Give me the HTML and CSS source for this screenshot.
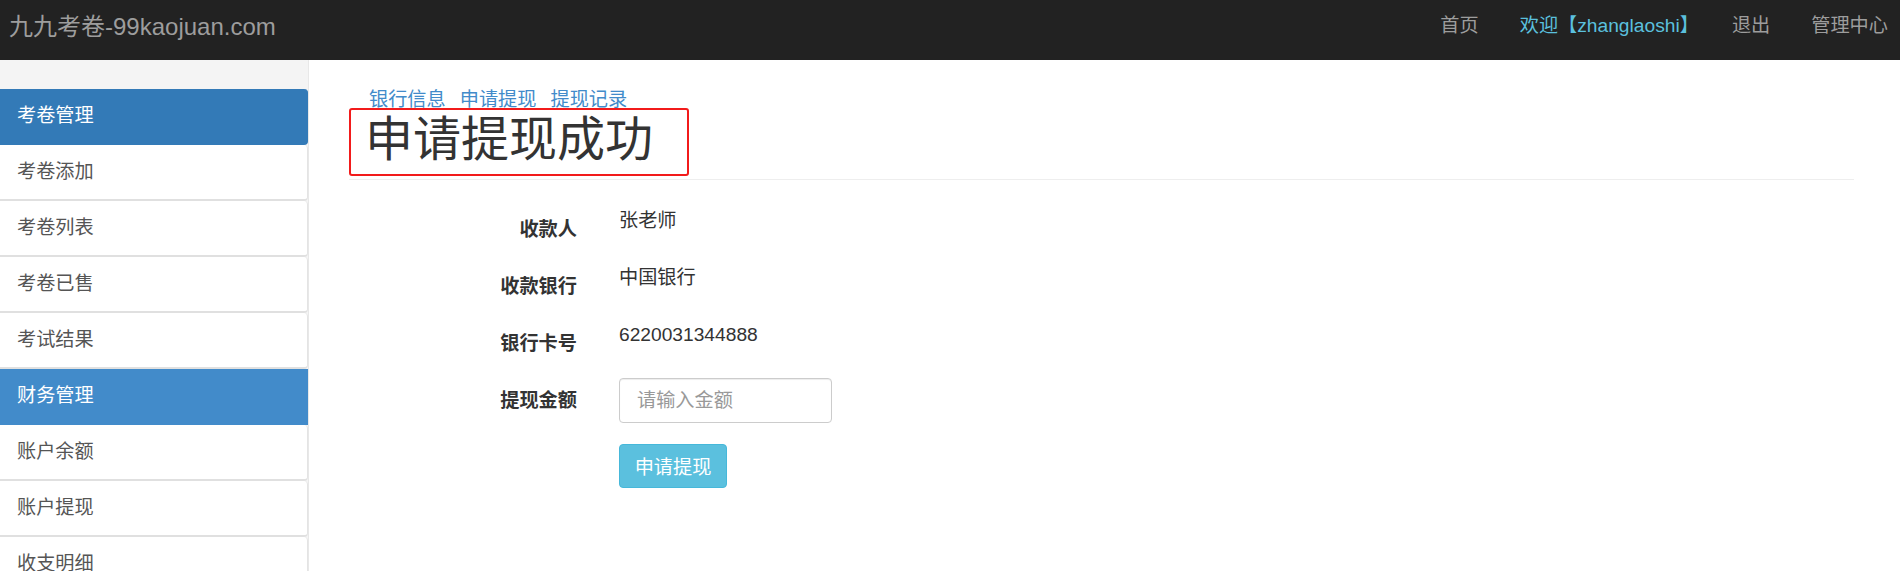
FILE: index.html
```html
<!DOCTYPE html>
<html lang="zh-CN">
<head>
<meta charset="UTF-8">
<meta name="viewport" content="width=device-width, initial-scale=1.0">
<title>申请提现 - 九九考卷</title>
<link rel="stylesheet" href="styles.css">
</head>
<body>
<div class="navbar">
    <a href="#" class="brand">九九考卷-99kaojuan.com</a>
    <ul class="nav">
        <li><a href="#">首页</a></li>
        <li><a href="#" class="welcome">欢迎【zhanglaoshi】</a></li>
        <li><a href="#">退出</a></li>
        <li><a href="#">管理中心</a></li>
    </ul>
</div>
<div class="main">
    <div class="sidebar">
        <a href="#" class="item active">考卷管理</a>
        <a href="#" class="item">考卷添加</a>
        <a href="#" class="item">考卷列表</a>
        <a href="#" class="item">考卷已售</a>
        <a href="#" class="item">考试结果</a>
        <a href="#" class="item group">财务管理</a>
        <a href="#" class="item">账户余额</a>
        <a href="#" class="item">账户提现</a>
        <a href="#" class="item">收支明细</a>
    </div>
    <div class="content">
        <div class="tabs">
            <a href="#">银行信息</a>
            <a href="#">申请提现</a>
            <a href="#">提现记录</a>
        </div>
        <h1 class="page-title">申请提现成功</h1>
        <div class="divider"></div>
        <form class="form">
            <div class="row">
                <label>收款人</label>
                <div class="value">张老师</div>
            </div>
            <div class="row">
                <label>收款银行</label>
                <div class="value">中国银行</div>
            </div>
            <div class="row">
                <label>银行卡号</label>
                <div class="value">6220031344888</div>
            </div>
            <div class="row input-row">
                <label>提现金额</label>
                <input type="text" placeholder="请输入金额">
            </div>
            <div class="row">
                <span></span>
                <button type="button" class="btn">申请提现</button>
            </div>
        </form>
    </div>
</div>
</body>
</html>
```

FILE: styles.css
```css
body {
  margin: 0;
  padding: 0;
  font-family: "Liberation Sans", "Noto Sans CJK SC", sans-serif;
  font-size: 19.2px;
  color: #333;
  background-color: #fff;
  overflow: hidden;
}

a {
  text-decoration: none;
}

.navbar {
  height: 60px;
  background-color: #222;
  display: flex;
  justify-content: space-between;
}

.brand {
  color: #9d9d9d;
  font-size: 24px;
  line-height: 30px;
  padding: 12px 0 0 9px;
}

.nav {
  list-style: none;
  margin: 0 12px 0 0;
  padding: 0;
  display: flex;
  gap: 41px;
}

.nav a {
  display: block;
  color: #9d9d9d;
  line-height: 24px;
  padding-top: 14px;
}

.nav a.welcome {
  color: #5bc0de;
  margin-right: -8px;
}

.main {
  display: flex;
  height: 511px;
}

.sidebar {
  width: 308px;
  padding-top: 29px;
  background-color: #f4f4f4;
  border-right: 1px solid #e8e8e8;
  display: flex;
  flex-direction: column;
}

.item {
  height: 56px;
  flex-shrink: 0;
  box-sizing: border-box;
  padding-left: 17px;
  line-height: 54px;
  color: #555;
  background-color: #fff;
  border-bottom: 2px solid #e0e0e0;
  border-right: 1px solid #e4e4e4;
  border-radius: 0 4px 4px 0;
}

.item.active {
  background-color: #337ab7;
  border-color: #337ab7;
  color: #fff;
}

.item.group {
  background-color: #428bca;
  border-color: #428bca;
  color: #fff;
  border-radius: 0;
}

.content {
  flex: 1;
  padding: 26px 46px 0 40px;
}

.tabs {
  display: flex;
  gap: 14px;
  padding-left: 20px;
  line-height: 28px;
}

.tabs a {
  color: #428bca;
}

.page-title {
  position: relative;
  width: 340px;
  height: 68px;
  box-sizing: border-box;
  margin: -6px 0 0 0;
  padding: 0 0 0 14px;
  border: 2px solid #f21b1b;
  border-radius: 3px;
  background-color: #fff;
  font-size: 48px;
  font-weight: normal;
  line-height: 60px;
  color: #333;
}

.divider {
  height: 1px;
  margin-top: 3px;
  background-color: #eee;
}

.form {
  padding-top: 27px;
}

.row {
  display: grid;
  grid-template-columns: 228px 213px;
  column-gap: 42px;
  height: 57px;
  align-items: start;
}

.row label {
  text-align: right;
  font-weight: bold;
  line-height: 28px;
  padding-top: 9px;
}

.value {
  line-height: 28px;
}

.row.input-row {
  height: 66px;
}

.row input {
  height: 45px;
  box-sizing: border-box;
  border: 1px solid #ccc;
  border-radius: 4px;
  padding: 0 17px;
  font-family: inherit;
  font-size: 19.2px;
  color: #555;
  box-shadow: inset 0 1px 1px rgba(0, 0, 0, 0.075);
}

.row input::placeholder {
  color: #999;
}

.btn {
  width: 108px;
  height: 44px;
  border: 1px solid #46b8da;
  border-radius: 4px;
  background-color: #5bc0de;
  color: #fff;
  font-family: inherit;
  font-size: 19.2px;
  padding: 0;
  cursor: pointer;
}
```
